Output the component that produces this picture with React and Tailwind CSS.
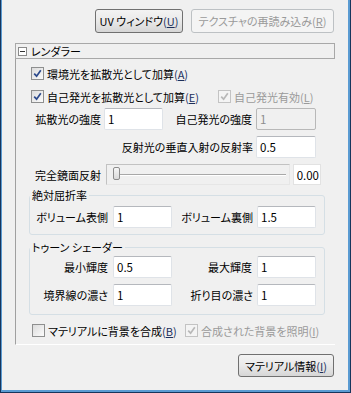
import React from "react";

const FONT = "[font-family:'Noto_Sans_CJK_JP','Noto_Sans',sans-serif] [font-feature-settings:'palt'] text-[11px] leading-[16px] text-black whitespace-nowrap";

function Key({ k }) {
  return (
    <span className="text-[#1b2f5c]">
      (<span className="underline">{k}</span>)
    </span>
  );
}

function Check({ checked, disabled }) {
  return (
    <span
      className={`w-[13px] h-[13px] border flex items-center justify-center shrink-0 ${
        disabled ? "border-[#c3c3c3] bg-[#f4f4f4]" : "border-[#8e8f8f] bg-gradient-to-br from-[#dcdcdc] to-[#fbfbfb]"
      }`}
    >
      {checked && (
        <svg width="9" height="9" viewBox="0 0 9 9">
          <path d="M1.2 4.6 L3.6 7.2 L7.8 1.2" fill="none" stroke={disabled ? "#b8b8b8" : "#2c4a8c"} strokeWidth="1.7" />
        </svg>
      )}
    </span>
  );
}

function Field({ value, w, disabled }) {
  return (
    <div
      className={`${w} h-[22px] border rounded-[2px] flex items-center pl-[3px] shrink-0 text-[11.5px] ${
        disabled
          ? "bg-[#f0f0f0] border-[#b8b8b8] text-[#8d8d8d]"
          : "bg-white border-[#dfe3e8] border-t-[#b5b8bd] text-black"
      }`}
    >
      {value}
    </div>
  );
}

function Button({ children, w, disabled }) {
  return (
    <div
      className={`${w} h-full border rounded-[3px] flex items-center justify-center ${
        disabled
          ? "border-[#bdc1c4] bg-[#f4f4f4] text-[#9a9a9a]"
          : "border-[#707070] bg-gradient-to-b from-[#f3f3f3] via-[#e9e9e9] to-[#d6d6d6] text-black"
      }`}
    >
      {children}
    </div>
  );
}

function Group({ title, children, pb }) {
  return (
    <fieldset className={`ml-[13px] w-[296px] border border-[#d5dfe5] rounded-[3px] ${pb}`}>
      <legend className="px-[2px] leading-[16px]">{title}</legend>
      {children}
    </fieldset>
  );
}

export default function App() {
  return (
    <div className={`w-[351px] h-[393px] bg-[#16355c] pl-[1px] pr-[1px] pb-[1px] flex ${FONT}`}>
      <div className="flex-1 bg-[#5a9bd2] pl-[1px] pr-[2px] pb-[2px] flex">
        <div className="flex-1 bg-[#f0f0f0] flex flex-col">
          {/* top buttons */}
          <div className="mt-[9px] h-[24px] flex justify-end gap-[8px] pr-[14px]">
            <Button w="w-[88px]">
              UV ウィンドウ<Key k="U" />
            </Button>
            <Button w="w-[143px]" disabled>
              テクスチャの再読み込み<span>(<span className="underline">R</span>)</span>
            </Button>
          </div>

          {/* renderer section */}
          <div className="mt-[10px] ml-[13px] w-[320px]">
            <div className="h-[16px] border border-[#a8a8a8] flex items-center pl-[2px] gap-[3px]">
              <svg width="9" height="9" viewBox="0 0 9 9">
                <rect x="0.5" y="0.5" width="8" height="8" fill="#fff" stroke="#8a8a8a" />
                <path d="M2 4.5 H7" stroke="#333" />
              </svg>
              <span className="pl-[1px]">レンダラー</span>
            </div>

            <div className="border-l border-l-[#a0a0a0] border-b border-b-white pb-[6px] flex flex-col">
              <div className="mt-[7px] h-[15px] flex items-center pl-[15px] gap-[3px]">
                <Check checked />
                <span>
                  環境光を拡散光として加算<Key k="A" />
                </span>
              </div>
              <div className="mt-[8px] h-[15px] flex items-center pl-[15px]">
                <div className="w-[187px] flex items-center gap-[3px]">
                  <Check checked />
                  <span>
                    自己発光を拡散光として加算<Key k="E" />
                  </span>
                </div>
                <div className="flex items-center gap-[3px] text-[#9a9a9a]">
                  <Check checked disabled />
                  <span>
                    自己発光有効(<span className="underline">L</span>)
                  </span>
                </div>
              </div>

              <div className="mt-[4px] flex items-center">
                <span className="w-[88px] text-right pr-[3px]">拡散光の強度</span>
                <Field value="1" w="w-[59px]" />
                <span className="w-[93px] text-right pr-[4px]">自己発光の強度</span>
                <Field value="1" w="w-[60px]" disabled />
              </div>

              <div className="mt-[6px] flex items-center">
                <span className="w-[240px] text-right pr-[3px]">反射光の垂直入射の反射率</span>
                <Field value="0.5" w="w-[60px]" />
              </div>

              <div className="mt-[6px] h-[21px] flex items-center">
                <span className="w-[90px] text-right pr-[5px]">完全鏡面反射</span>
                <div className="relative w-[184px] h-[21px] border border-[#c2c2c2] border-b-[#e6e6e6] border-r-[#e6e6e6] flex items-center pl-[6px] pr-[3px]">
                  <div className="flex-1 h-[2px] border-t border-t-[#a8a8a8] border-b border-b-white" />
                  <div className="absolute left-[6px] top-[2px] w-[7px] h-[13px] rounded-[2px] border border-[#8c8c8c] bg-gradient-to-b from-[#f6f6f6] to-[#dadada]" />
                </div>
                <div className="ml-[3px] w-[28px] h-[21px] bg-white border border-[#e2e2e2] flex items-center justify-end pr-[1px] text-[11.5px]">
                  0.00
                </div>
              </div>

              <div className="mt-[2px]">
                <Group title="絶対屈折率" pb="pb-[6px]">
                  <div className="mt-[3px] flex items-center">
                    <span className="w-[83px] text-right pr-[5px]">ボリューム表側</span>
                    <Field value="1" w="w-[59px]" />
                    <span className="w-[85px] text-right pr-[4px]">ボリューム裏側</span>
                    <Field value="1.5" w="w-[59px]" />
                  </div>
                </Group>
              </div>

              <div className="mt-[4px]">
                <Group title="トゥーン シェーダー" pb="pb-[8px]">
                  <div className="mt-[1px] flex items-center">
                    <span className="w-[83px] text-right pr-[5px]">最小輝度</span>
                    <Field value="0.5" w="w-[59px]" />
                    <span className="w-[85px] text-right pr-[5px]">最大輝度</span>
                    <Field value="1" w="w-[59px]" />
                  </div>
                  <div className="mt-[6px] flex items-center">
                    <span className="w-[83px] text-right pr-[5px]">境界線の濃さ</span>
                    <Field value="1" w="w-[59px]" />
                    <span className="w-[85px] text-right pr-[4px]">折り目の濃さ</span>
                    <Field value="1" w="w-[59px]" />
                  </div>
                </Group>
              </div>

              <div className="mt-[8px] h-[15px] flex items-center pl-[16px]">
                <div className="w-[153px] flex items-center gap-[3px]">
                  <Check />
                  <span>
                    マテリアルに背景を合成<Key k="B" />
                  </span>
                </div>
                <div className="flex items-center gap-[3px] text-[#9a9a9a]">
                  <Check checked disabled />
                  <span>
                    合成された背景を照明(<span className="underline">I</span>)
                  </span>
                </div>
              </div>
            </div>
          </div>

          {/* bottom button */}
          <div className="mt-[9px] h-[23px] flex justify-end pr-[14px]">
            <Button w="w-[96px]">
              マテリアル情報<Key k="I" />
            </Button>
          </div>
        </div>
      </div>
    </div>
  );
}
